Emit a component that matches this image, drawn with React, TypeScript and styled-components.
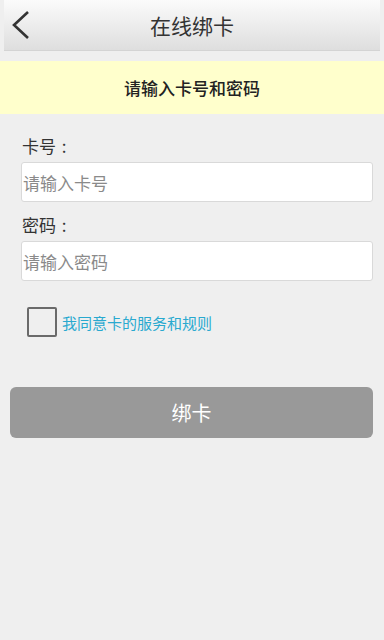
import React, { useState } from 'react';
import styled, { createGlobalStyle } from 'styled-components';

const GlobalStyle = createGlobalStyle`
  html, body {
    margin: 0;
    padding: 0;
    background: #efefef;
    font-family: "Noto Sans CJK SC", "Liberation Sans", sans-serif;
  }
`;

const App: React.FC = () => {
  const [agreed, setAgreed] = useState(false);

  return (
    <Page>
      <GlobalStyle />
      <Header>
        <BackButton aria-label="返回">
          <svg width="22" height="30" viewBox="0 0 22 30">
            <polyline points="18,2 4,15 18,28" fill="none" stroke="#333" strokeWidth="2.6" />
          </svg>
        </BackButton>
        <Title>在线绑卡</Title>
      </Header>
      <Notice>请输入卡号和密码</Notice>
      <Form>
        <Label>卡号 :</Label>
        <Input placeholder="请输入卡号" />
        <Label>密码 :</Label>
        <Input type="password" placeholder="请输入密码" />
        <AgreeRow>
          <CheckBox checked={agreed} onClick={() => setAgreed(!agreed)} />
          <AgreeText>我同意卡的服务和规则</AgreeText>
        </AgreeRow>
      </Form>
      <ButtonWrap>
        <BindButton>绑卡</BindButton>
      </ButtonWrap>
    </Page>
  );
};

const Page = styled.div`
  min-height: 640px;
  background: #efefef;
`;

const Header = styled.div`
  height: 50px;
  margin: 0 4px;
  position: relative;
  display: flex;
  align-items: center;
  justify-content: center;
  background: linear-gradient(#fbfbfb, #dedede);
  border-bottom: 1px solid #d4d4d4;
`;

const BackButton = styled.button`
  position: absolute;
  left: 6px;
  top: 10px;
  padding: 0;
  border: none;
  background: transparent;
  cursor: pointer;
`;

const Title = styled.h1`
  margin: 0;
  font-size: 21px;
  font-weight: normal;
  color: #333;
`;

const Notice = styled.div`
  margin-top: 10px;
  height: 53px;
  display: flex;
  align-items: center;
  justify-content: center;
  background: #ffffcc;
  font-size: 17px;
  font-weight: 500;
  color: #222;
`;

const Form = styled.div`
  padding: 20px 11px 0 21px;
  display: flex;
  flex-direction: column;
`;

const Label = styled.div`
  font-size: 17px;
  color: #333;
  height: 24px;
  line-height: 24px;
  margin-left: 1px;
  margin-bottom: 4px;
  word-spacing: 2px;
`;

const Input = styled.input`
  box-sizing: border-box;
  height: 40px;
  width: 100%;
  margin-bottom: 11px;
  padding: 0 1px;
  border: 1px solid #d9d9d9;
  border-radius: 3px;
  background: #fff;
  font-size: 17px;
  font-family: inherit;
  color: #333;
  outline: none;
  &::placeholder {
    color: #8a8a8a;
  }
`;

const AgreeRow = styled.div`
  display: flex;
  align-items: center;
  margin-top: 15px;
  margin-left: 6px;
`;

const CheckBox = styled.div<{ checked: boolean }>`
  box-sizing: border-box;
  width: 30px;
  height: 30px;
  border: 2px solid #6a6a6a;
  border-radius: 2px;
  background: ${(p) => (p.checked ? '#2aa6cc' : 'transparent')};
  cursor: pointer;
`;

const AgreeText = styled.span`
  margin-left: 5px;
  font-size: 15px;
  color: #29a9cf;
`;

const ButtonWrap = styled.div`
  padding: 50px 11px 0 10px;
`;

const BindButton = styled.button`
  width: 100%;
  height: 51px;
  border: none;
  border-radius: 6px;
  background: #999;
  color: #fff;
  font-size: 20px;
  font-family: inherit;
  cursor: pointer;
`;

export default App;
